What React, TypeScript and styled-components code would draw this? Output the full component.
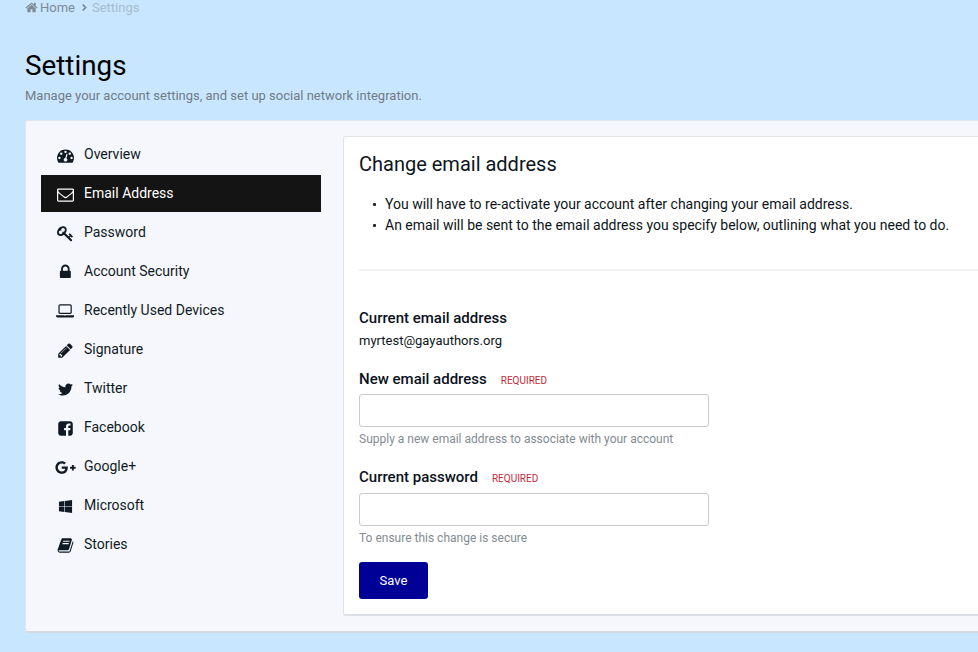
import React from "react";
import styled, { createGlobalStyle } from "styled-components";
import { FaGooglePlusG, FaTwitter, FaWindows, FaAngleRight } from "react-icons/fa";

const Global = createGlobalStyle`
  html, body { margin: 0; padding: 0; height: 652px; overflow: hidden; background: #c8e6ff; }
  body { font-family: Roboto, "Liberation Sans", sans-serif; color: #000; }
  * { box-sizing: border-box; }
`;

const Page = styled.div`
  width: 1160px;
  padding: 0 25px;
`;

const Breadcrumb = styled.nav`
  display: flex;
  align-items: center;
  height: 15px;
  font-size: 13px;
  line-height: 15px;
  color: #7e8a94;
`;

const HomeLink = styled.span`
  display: flex;
  align-items: center;
  gap: 2px;
`;

const Separator = styled.span`
  display: flex;
  align-items: center;
  margin: 0 2px 0 4px;
`;

const Current = styled.span`
  color: #a7bccc;
`;

const Title = styled.h1`
  margin: 35px 0 0;
  font-size: 27.8px;
  line-height: 32px;
  font-weight: 400;
  color: #000;
`;

const Subtitle = styled.p`
  margin: 5px 0 0;
  font-size: 13px;
  line-height: 18px;
  color: #727c85;
`;

const Panel = styled.section`
  display: flex;
  align-items: flex-start;
  gap: 22px;
  margin-top: 15px;
  height: 513px;
  padding: 15px 16px 15px 15px;
  background: #f5f7fc;
  border: 1px solid #dfe6ec;
  border-right: none;
  border-bottom: 2px solid #d6dade;
  border-radius: 3px 0 0 3px;
`;

const Sidebar = styled.ul`
  width: 280px;
  flex: none;
  list-style: none;
  margin: 0;
  padding: 0;
  display: flex;
  flex-direction: column;
  gap: 2px;
`;

const Item = styled.li<{ $active?: boolean }>`
  display: flex;
  align-items: center;
  height: 37px;
  padding-bottom: 2px;
  font-size: 14px;
  background: ${(p) => (p.$active ? "#141414" : "transparent")};
  color: ${(p) => (p.$active ? "#fff" : "#111a24")};
`;

const IconSlot = styled.span`
  width: 43px;
  flex: none;
  display: flex;
  justify-content: center;
  padding-left: 5px;
  padding-top: 4px;
  line-height: 0;
  svg { display: block; }
`;

const Glyph = styled.svg`
  display: block;
  fill: currentColor;
  fill-rule: evenodd;
`;

const Card = styled.main`
  width: 780px;
  height: 480px;
  flex: none;
  background: #fff;
  border: 1px solid #e1e3e6;
  border-bottom: 2px solid #dcdfe3;
  border-radius: 3px 0 0 3px;
  padding: 14px 14px 14px 15px;
`;

const CardTitle = styled.h2`
  margin: 0;
  font-size: 20px;
  line-height: 26px;
  font-weight: 400;
  color: #0c1520;
`;

const Notes = styled.ul`
  list-style: none;
  margin: 17px 0 0;
  padding: 0 0 33px;
  border-bottom: 2px solid #f1f2f4;
`;

const Note = styled.li`
  position: relative;
  padding-left: 26px;
  font-size: 14px;
  line-height: 21px;
  color: #0c1520;
  &::before {
    content: "";
    position: absolute;
    left: 14px;
    top: 9px;
    width: 3px;
    height: 3px;
    border-radius: 1px;
    background: #222;
  }
`;

const Static = styled.div`
  margin-top: 37px;
`;

const Label = styled.div`
  display: flex;
  align-items: baseline;
  font-size: 15px;
  line-height: 20px;
  font-weight: 500;
  color: #0a121c;
`;

const Required = styled.span`
  margin-left: 14px;
  font-size: 10px;
  font-weight: 400;
  color: #c3293a;
`;

const Value = styled.div`
  margin-top: 3px;
  font-size: 13px;
  line-height: 20px;
  color: #0c1520;
`;

const Field = styled.div<{ $top: number }>`
  margin-top: ${(p) => p.$top}px;
`;

const Input = styled.input<{ $gap: number }>`
  display: block;
  width: 350px;
  height: 33px;
  margin-top: ${(p) => p.$gap}px;
  background: #fff;
  border: 1px solid #c8cacc;
  border-radius: 3px;
  outline: none;
`;

const Hint = styled.div`
  margin-top: 4px;
  font-size: 12px;
  line-height: 16px;
  color: #838b93;
`;

const SaveButton = styled.button`
  display: block;
  width: 69px;
  height: 37px;
  margin-top: 16px;
  background: #000096;
  color: #fff;
  border: none;
  border-radius: 3px;
  font-family: inherit;
  font-size: 13px;
`;

const P = {
  home: "M1472 992v480q0 26-19 45t-45 19h-384v-384h-256v384h-384q-26 0-45-19t-19-45v-480q0-1 .5-3t.5-3l575-474 575 474q1 2 1 6zm223-69l-62 74q-8 9-21 11h-3q-13 0-21-7l-692-577-692 577q-12 8-24 7-13-2-21-11l-62-74q-8-10-7-23.5t11-21.5l719-599q32-26 76-26t76 26l244 204v-195q0-14 9-23t23-9h192q14 0 23 9t9 23v408l219 182q10 8 11 21.5t-7 23.5z",
  gauge: "M384 1152q0-53-37.5-90.5t-90.5-37.5-90.5 37.5-37.5 90.5 37.5 90.5 90.5 37.5 90.5-37.5 37.5-90.5zm192-448q0-53-37.5-90.5t-90.5-37.5-90.5 37.5-37.5 90.5 37.5 90.5 90.5 37.5 90.5-37.5 37.5-90.5zm428 481l101-382q6-26-7.5-48.5t-38.5-29.5-48 6.5-30 39.5l-101 382q-60 5-107 43.5t-63 98.5q-20 77 20 146t117 89 146-20 89-117q16-60-6-117t-72-91zm660-33q0-53-37.5-90.5t-90.5-37.5-90.5 37.5-37.5 90.5 37.5 90.5 90.5 37.5 90.5-37.5 37.5-90.5zm-640-640q0-53-37.5-90.5t-90.5-37.5-90.5 37.5-37.5 90.5 37.5 90.5 90.5 37.5 90.5-37.5 37.5-90.5zm448 192q0-53-37.5-90.5t-90.5-37.5-90.5 37.5-37.5 90.5 37.5 90.5 90.5 37.5 90.5-37.5 37.5-90.5zm320 448q0 261-141 483-19 29-54 29h-1402q-35 0-54-29-141-221-141-483 0-182 71-348t191-286 286-191 348-71 348 71 286 191 191 286 71 348z",
  envelope: "M1664 1504v-768q-32 36-69 66-268 206-426 338-51 43-83 67t-86.5 48.5-102.5 24.5h-2q-48 0-102.5-24.5t-86.5-48.5-83-67q-158-132-426-338-37-30-69-66v768q0 13 9.5 22.5t22.5 9.5h1472q13 0 22.5-9.5t9.5-22.5zm0-1051v-24.5l-.5-13-3-12.5-5.5-9-9-7.5-14-2.5h-1472q-13 0-22.5 9.5t-9.5 22.5q0 168 147 284 193 152 401 317 6 5 35 29.5t46 37.5 44.5 31.5 50.5 27.5 43 9h2q20 0 43-9t50.5-27.5 44.5-31.5 46-37.5 35-29.5q208-165 401-317 54-43 100.5-115.5t46.5-131.5zm128-37v1088q0 66-47 113t-113 47h-1472q-66 0-113-47t-47-113v-1088q0-66 47-113t113-47h1472q66 0 113 47t47 113z",
  key: "M832 512q0-80-56-136t-136-56-136 56-56 136q0 42 19 83-41-19-83-19-80 0-136 56t-56 136 56 136 136 56 136-56 56-136q0-42-19-83 41 19 83 19 80 0 136-56t56-136zm851 704q0 17-49 66t-66 49q-9 0-28.5-16t-36.5-33-38.5-40-24.5-26l-96 96 220 220q28 28 28 68 0 42-39 81t-81 39q-40 0-68-28l-671-671q-176 131-365 131-163 0-265.5-102.5t-102.5-265.5q0-160 95-313t248-248 313-95q163 0 265.5 102.5t102.5 265.5q0 189-131 365l355 355 96-96q-3-3-26-24.5t-40-38.5-33-36.5-16-28.5q0-17 49-66t66-49q13 0 23 10 6 6 46 44.5t82 79.5 86.5 86 73 78 28.5 41z",
  lock: "M520 704h512v-192q0-106-75-181t-181-75-181 75-75 181v192zm832 96v576q0 40-28 68t-68 28h-960q-40 0-68-28t-28-68v-576q0-40 28-68t68-28h32v-192q0-184 132-316t316-132 316 132 132 316v192h32q40 0 68 28t28 68z",
  laptop: "M416 1152q-66 0-113-47t-47-113v-704q0-66 47-113t113-47h1088q66 0 113 47t47 113v704q0 66-47 113t-113 47h-1088zm-32-864v704q0 13 9.5 22.5t22.5 9.5h1088q13 0 22.5-9.5t9.5-22.5v-704q0-13-9.5-22.5t-22.5-9.5h-1088q-13 0-22.5 9.5t-9.5 22.5zm1376 992h160v96q0 66-47 113t-113 47h-1600q-66 0-113-47t-47-113v-96h1760zm-720 96q16 0 16-16t-16-16h-160q-16 0-16 16t16 16h160z",
  pencil: "M491 1536l91-91-235-235-91 91v107h128v128h107zm523-928q0-22-22-22-10 0-17 7l-542 542q-7 7-7 17 0 22 22 22 10 0 17-7l542-542q7-7 7-17zm-54-192l416 416-832 832h-416v-416zm683 96q0 53-37 90l-166 166-416-416 166-165q36-38 90-38 53 0 91 38l235 234q37 39 37 91z",
  facebook: "M1376 128q119 0 203.5 84.5t84.5 203.5v960q0 119-84.5 203.5t-203.5 84.5h-188v-595h199l30-232h-229v-148q0-56 23.5-84t91.5-28l122-1v-207q-63-9-178-9-136 0-217.5 80t-81.5 226v171h-200v232h200v595h-532q-119 0-203.5-84.5t-84.5-203.5v-960q0-119 84.5-203.5t203.5-84.5h960z",
  book: "M1703 478q40 57 18 129l-275 906q-19 64-76.5 107.5t-122.5 43.5h-923q-77 0-148.5-53.5t-99.5-131.5q-24-67-2-127 0-4 3-27t4-37q1-8-3-21.5t-3-19.5q2-11 8-21t16.5-23.5 16.5-23.5q23-38 45-91.5t30-91.5q3-10 .5-30t-.5-28q3-11 17-28t17-23q21-36 42-92t25-90q1-9-2.5-32t.5-28q4-13 22-30.5t22-22.5q19-26 42.5-84.5t27.5-96.5q1-8-3-25.5t-2-26.5q2-8 9-18t18-23 17-21q8-12 16.5-30.5t15-35 16-36 19.5-32 26.5-23.5 36-11.5 47.5 5.5l-1 3q38-9 51-9h761q74 0 114 56t18 130l-274 906q-36 119-71.5 153.5t-128.5 34.5h-869q-27 0-38 15-11 16-1 43 24 70 144 70h923q29 0 56-15.5t35-41.5l300-987q7-22 5-57 38 15 59 43zm-1064 2q-4 13 2 22.5t20 9.5h608q13 0 25.5-9.5t16.5-22.5l21-64q4-13-2-22.5t-20-9.5h-608q-13 0-25.5 9.5t-16.5 22.5zm-83 256q-4 13 2 22.5t20 9.5h608q13 0 25.5-9.5t16.5-22.5l21-64q4-13-2-22.5t-20-9.5h-608q-13 0-25.5 9.5t-16.5 22.5z",
};

function Fa4({ d, size, w = 1792 }: { d: string; size: number; w?: number }) {
  return (
    <Glyph viewBox={`0 0 ${w} 1792`} width={(size * w) / 1792} height={size} aria-hidden="true">
      <path d={d} />
    </Glyph>
  );
}

const items: { label: string; icon: React.ReactNode }[] = [
  { label: "Overview", icon: <Fa4 d={P.gauge} size={17} /> },
  { label: "Email Address", icon: <Fa4 d={P.envelope} size={17} /> },
  { label: "Password", icon: <Fa4 d={P.key} size={17} /> },
  { label: "Account Security", icon: <Fa4 d={P.lock} size={17} w={1408} /> },
  { label: "Recently Used Devices", icon: <Fa4 d={P.laptop} size={17} w={1920} /> },
  { label: "Signature", icon: <Fa4 d={P.pencil} size={17} /> },
  { label: "Twitter", icon: <FaTwitter size={15} /> },
  { label: "Facebook", icon: <Fa4 d={P.facebook} size={17} /> },
  { label: "Google+", icon: <FaGooglePlusG size={21} /> },
  { label: "Microsoft", icon: <FaWindows size={15} /> },
  { label: "Stories", icon: <Fa4 d={P.book} size={17} /> },
];

export default function App() {
  return (
    <Page>
      <Global />
      <Breadcrumb>
        <HomeLink><Fa4 d={P.home} size={13} />Home</HomeLink>
        <Separator><FaAngleRight size={11} /></Separator>
        <Current>Settings</Current>
      </Breadcrumb>
      <Title>Settings</Title>
      <Subtitle>Manage your account settings, and set up social network integration.</Subtitle>
      <Panel>
        <Sidebar>
          {items.map((it) => (
            <Item key={it.label} $active={it.label === "Email Address"}>
              <IconSlot>{it.icon}</IconSlot>
              {it.label}
            </Item>
          ))}
        </Sidebar>
        <Card>
          <CardTitle>Change email address</CardTitle>
          <Notes>
            <Note>You will have to re-activate your account after changing your email address.</Note>
            <Note>An email will be sent to the email address you specify below, outlining what you need to do.</Note>
          </Notes>
          <Static>
            <Label>Current email address</Label>
            <Value>myrtest@gayauthors.org</Value>
          </Static>
          <Field $top={18}>
            <Label>New email address<Required>REQUIRED</Required></Label>
            <Input type="text" $gap={3} />
            <Hint>Supply a new email address to associate with your account</Hint>
          </Field>
          <Field $top={20}>
            <Label>Current password<Required>REQUIRED</Required></Label>
            <Input type="password" $gap={4} />
            <Hint>To ensure this change is secure</Hint>
          </Field>
          <SaveButton>Save</SaveButton>
        </Card>
      </Panel>
    </Page>
  );
}
